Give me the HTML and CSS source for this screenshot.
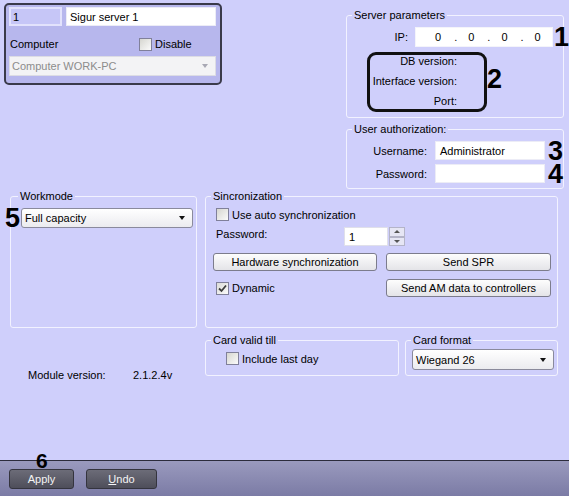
FILE: index.html
```html
<!DOCTYPE html>
<html>
<head>
<meta charset="utf-8">
<link rel="stylesheet" href="styles.css">
</head>
<body>
<div class="page">
  <div class="main">
    <div class="top">
      <div class="top-left">
        <div class="ident">
          <div class="ident-row">
            <div class="field num">1</div>
            <div class="field name">Sigur server 1</div>
          </div>
          <div class="ident-row2">
            <span class="comp-lbl">Computer</span>
            <span class="check"><span class="box"></span>Disable</span>
          </div>
          <div class="combo disabled"><span>Computer WORK-PC</span><span class="arrow"></span></div>
        </div>
      </div>
      <div class="top-right">
        <fieldset class="group server">
          <legend>Server parameters</legend>
          <div class="ip-row">
            <span class="ip-lbl">IP:</span>
            <div class="field ip"><span class="oct">0</span><span class="dot">.</span><span class="oct">0</span><span class="dot">.</span><span class="oct">0</span><span class="dot">.</span><span class="oct">0</span></div>
            <span class="mark m1">1</span>
          </div>
          <div class="info-box">
            <div class="info-row">DB version:</div>
            <div class="info-row">Interface version:</div>
            <div class="info-row">Port:</div>
            <span class="mark m2">2</span>
          </div>
        </fieldset>
        <fieldset class="group auth">
          <legend>User authorization:</legend>
          <div class="auth-row">
            <span class="auth-lbl">Username:</span>
            <div class="field auth-field">Administrator</div>
            <span class="mark m3">3</span>
          </div>
          <div class="auth-row second">
            <span class="auth-lbl">Password:</span>
            <div class="field auth-field"></div>
            <span class="mark m3">4</span>
          </div>
        </fieldset>
      </div>
    </div>
    <div class="lower">
      <div class="lcol">
        <fieldset class="group workmode">
          <legend>Workmode</legend>
          <div class="wm-row">
            <div class="combo wm-combo"><span>Full capacity</span><span class="arrow"></span></div>
            <span class="mark m5">5</span>
          </div>
        </fieldset>
        <div class="module">
          <span class="module-lbl">Module version:</span>
          <span>2.1.2.4v</span>
        </div>
      </div>
      <div class="rcol">
        <fieldset class="group sync">
          <legend>Sincronization</legend>
          <div class="sync-row1">
            <span class="check"><span class="box"></span>Use auto synchronization</span>
          </div>
          <div class="sync-row2">
            <span class="pw-lbl">Password:</span>
            <div class="field spin-field">1</div>
            <div class="spin">
              <span class="spin-btn"><span class="tri-up"></span></span>
              <span class="spin-btn"><span class="tri-down"></span></span>
            </div>
          </div>
          <div class="sync-row3">
            <div class="btn hw">Hardware synchronization</div>
            <div class="btn spr">Send SPR</div>
          </div>
          <div class="sync-row4">
            <span class="check dyn"><span class="box checked"><svg width="9" height="9" viewBox="0 0 9 9"><path d="M1 4.5 L3.5 7 L8 1.5" fill="none" stroke="#3c3c3c" stroke-width="1.8"/></svg></span>Dynamic</span>
            <div class="btn am">Send AM data to controllers</div>
          </div>
        </fieldset>
        <div class="cards">
          <fieldset class="group valid">
            <legend>Card valid till</legend>
            <div class="valid-row">
              <span class="check"><span class="box"></span>Include last day</span>
            </div>
          </fieldset>
          <fieldset class="group format">
            <legend>Card format</legend>
            <div class="combo fmt-combo"><span>Wiegand 26</span><span class="arrow"></span></div>
          </fieldset>
        </div>
      </div>
    </div>
  </div>
  <div class="footer">
    <div class="fbtn apply">Apply</div>
    <div class="fbtn undo"><u>U</u>ndo</div>
    <span class="mark m6">6</span>
  </div>
</div>
</body>
</html>
```

FILE: styles.css
```css
* { box-sizing: border-box; }
html, body { margin: 0; padding: 0; }
body {
  width: 569px;
  height: 496px;
  overflow: hidden;
  background: #cfcffb;
  font-family: "Liberation Sans", Arial, sans-serif;
  font-size: 11px;
  color: #000;
}
.page { width: 569px; height: 496px; display: flex; flex-direction: column; }
.main { flex: 1; }

/* generic */
.group {
  margin: 0;
  padding: 0;
  min-width: 0;
  border: 1px solid #f2f2ff;
  border-radius: 3px;
}
.group legend {
  padding: 0 2px;
  margin-left: 5px;
  line-height: 14px;
  height: 14px;
}
.field {
  background: #fff;
  border: 1px solid #ececf6;
  display: flex;
  align-items: center;
  padding-left: 3px;
}
.check { display: inline-flex; align-items: center; white-space: nowrap; }
.box {
  width: 13px; height: 13px;
  border: 1px solid #80809a;
  background: linear-gradient(135deg, #d6d6d0, #fbfbfb);
  margin-right: 3px;
  display: inline-flex; align-items: center; justify-content: center;
}
.combo {
  display: flex; align-items: center; justify-content: space-between;
  border: 1px solid #8a8a9c;
  border-radius: 3px;
  background: linear-gradient(#ffffff, #ebebef);
  padding: 0 7px 0 3px;
  white-space: nowrap;
}
.arrow {
  width: 0; height: 0;
  border-left: 3.5px solid transparent;
  border-right: 3.5px solid transparent;
  border-top: 4px solid #111;
}
.btn {
  height: 18px;
  border: 1px solid #7c7c8c;
  border-radius: 3px;
  background: linear-gradient(#fdfdfd, #e4e4e8);
  display: flex; align-items: center; justify-content: center;
  white-space: nowrap;
}
.mark {
  position: absolute;
  font-weight: bold;
  font-size: 27px;
  line-height: 19px;
  height: 19px;
  color: #000;
}

/* top section */
.top { display: flex; height: 189px; }
.top-left { width: 346px; }
.ident {
  margin: 3px 0 0 4px;
  width: 218px;
  height: 82px;
  border: 2px solid #3a3a4a;
  border-radius: 5px;
  background: #b7b7ed;
  padding: 2px 0 0 3px;
}
.ident-row { display: flex; gap: 4px; }
.field.num {
  width: 53px; height: 19px;
  background: #c6c6f7;
  border: 2px solid #e2e2fc;
  padding-left: 2px;
}
.field.name { width: 150px; height: 19px; padding-left: 3px; }
.ident-row2 { display: flex; align-items: center; height: 20px; margin-top: 8px; padding-left: 1px; }
.comp-lbl { width: 129px; }
.combo.disabled {
  margin-top: 2px;
  width: 207px; height: 20px;
  background: #f3f3f5;
  border: 1px solid #dcdce4;
  border-radius: 0;
  color: #8c8c8c;
  padding-left: 2px;
}
.combo.disabled .arrow { border-top-color: #a8a8b4; }

.top-right { width: 218px; }
.server { margin-top: 8px; height: 110px; }
.ip-row {
  position: relative;
  margin-top: 5px;
  height: 20px;
  display: flex; align-items: center; justify-content: flex-end;
  padding-right: 10px;
}
.ip-lbl { margin-right: 7px; }
.field.ip { width: 138px; height: 20px; padding-left: 19px; border-color: #f4f4fa; }
.oct { margin-right: 13px; }
.dot { margin-right: 11px; }
.m1 { left: 207px; top: 1px; }
.info-box {
  position: relative;
  margin: 5px 0 0 20px;
  width: 120px; height: 60px;
  border: 3px solid #111;
  border-radius: 9px;
  padding: 0 27px 2px 0;
  display: flex; flex-direction: column; gap: 8px;
  align-items: flex-end;
}
.info-row { line-height: 12px; height: 12px; white-space: nowrap; }
.m2 { left: 117px; top: 15px; }

.auth { margin-top: 4px; height: 67px; }
.auth-row {
  position: relative;
  margin-top: 5px;
  height: 19px;
  display: flex; align-items: center; justify-content: flex-end;
  padding-right: 18px;
}
.auth-row.second { margin-top: 4px; }
.auth-lbl { margin-right: 8px; }
.field.auth-field { width: 110px; height: 19px; padding-left: 4px; }
.m3 { left: 201px; top: 1px; }

/* lower section */
.lower { display: flex; }
.lcol { width: 205px; padding-left: 10px; }
.workmode { width: 187px; height: 139px; }
.workmode legend { margin-left: 7px; }
.wm-row { position: relative; margin: 5px 0 0 10px; }
.wm-combo { width: 172px; height: 20px; }
.m5 { left: -16px; top: 1px; }
.module { margin-top: 40px; padding-left: 18px; display: flex; line-height: 14px; }
.module-lbl { width: 105px; }

.rcol { width: 353px; }
.sync { height: 139px; }
.sync-row1 { margin-top: 4px; height: 15px; padding-left: 10px; display: flex; align-items: center; }
.sync-row2 { margin-top: 5px; height: 19px; padding-left: 10px; display: flex; align-items: flex-start; }
.pw-lbl { width: 128px; line-height: 14px; }
.field.spin-field { width: 44px; height: 19px; border-color: #e0e0ea; padding-left: 4px; }
.spin { margin-left: 1px; width: 16px; height: 19px; display: flex; flex-direction: column; }
.spin-btn {
  flex: 1;
  border: 1px solid #b4b4c8;
  background: #e6e6f4;
  display: flex; align-items: center; justify-content: center;
}
.tri-up, .tri-down { width: 0; height: 0; border-left: 3px solid transparent; border-right: 3px solid transparent; }
.tri-up { border-bottom: 3px solid #555; }
.tri-down { border-top: 3px solid #555; }
.sync-row3 { margin-top: 7px; padding-left: 7px; display: flex; gap: 9px; }
.btn.hw { width: 164px; }
.btn.spr { width: 165px; }
.sync-row4 { margin-top: 8px; padding-left: 10px; display: flex; align-items: center; }
.check.dyn { width: 170px; }
.btn.am { width: 165px; }
.box.checked { background: linear-gradient(135deg, #dcdcd8, #fafafa); }

.cards { display: flex; gap: 6px; margin-top: 5px; }
.valid { width: 194px; height: 43px; }
.valid-row { margin-top: 4px; height: 15px; padding-left: 20px; display: flex; align-items: center; }
.format { width: 153px; height: 43px; }
.fmt-combo { margin: 2px 0 0 6px; width: 142px; height: 21px; }

/* footer */
.footer {
  position: relative;
  height: 36px;
  border-top: 1px solid #2c2c3c;
  background: linear-gradient(#9a9abe, #7b7ba5);
  padding: 8px 0 0 9px;
  display: flex;
  align-items: flex-start;
}
.fbtn {
  height: 20px;
  border: 1px solid #34343e;
  border-radius: 3px;
  background: linear-gradient(#6c6c78, #4e4e5a);
  color: #f4f4f4;
  display: flex; align-items: center; justify-content: center;
}
.fbtn.apply { width: 65px; }
.fbtn.undo { width: 71px; margin-left: 12px; }
.m6 { font-size: 21px; line-height: 15px; height: 15px; left: 36px; top: -8px; }
```
